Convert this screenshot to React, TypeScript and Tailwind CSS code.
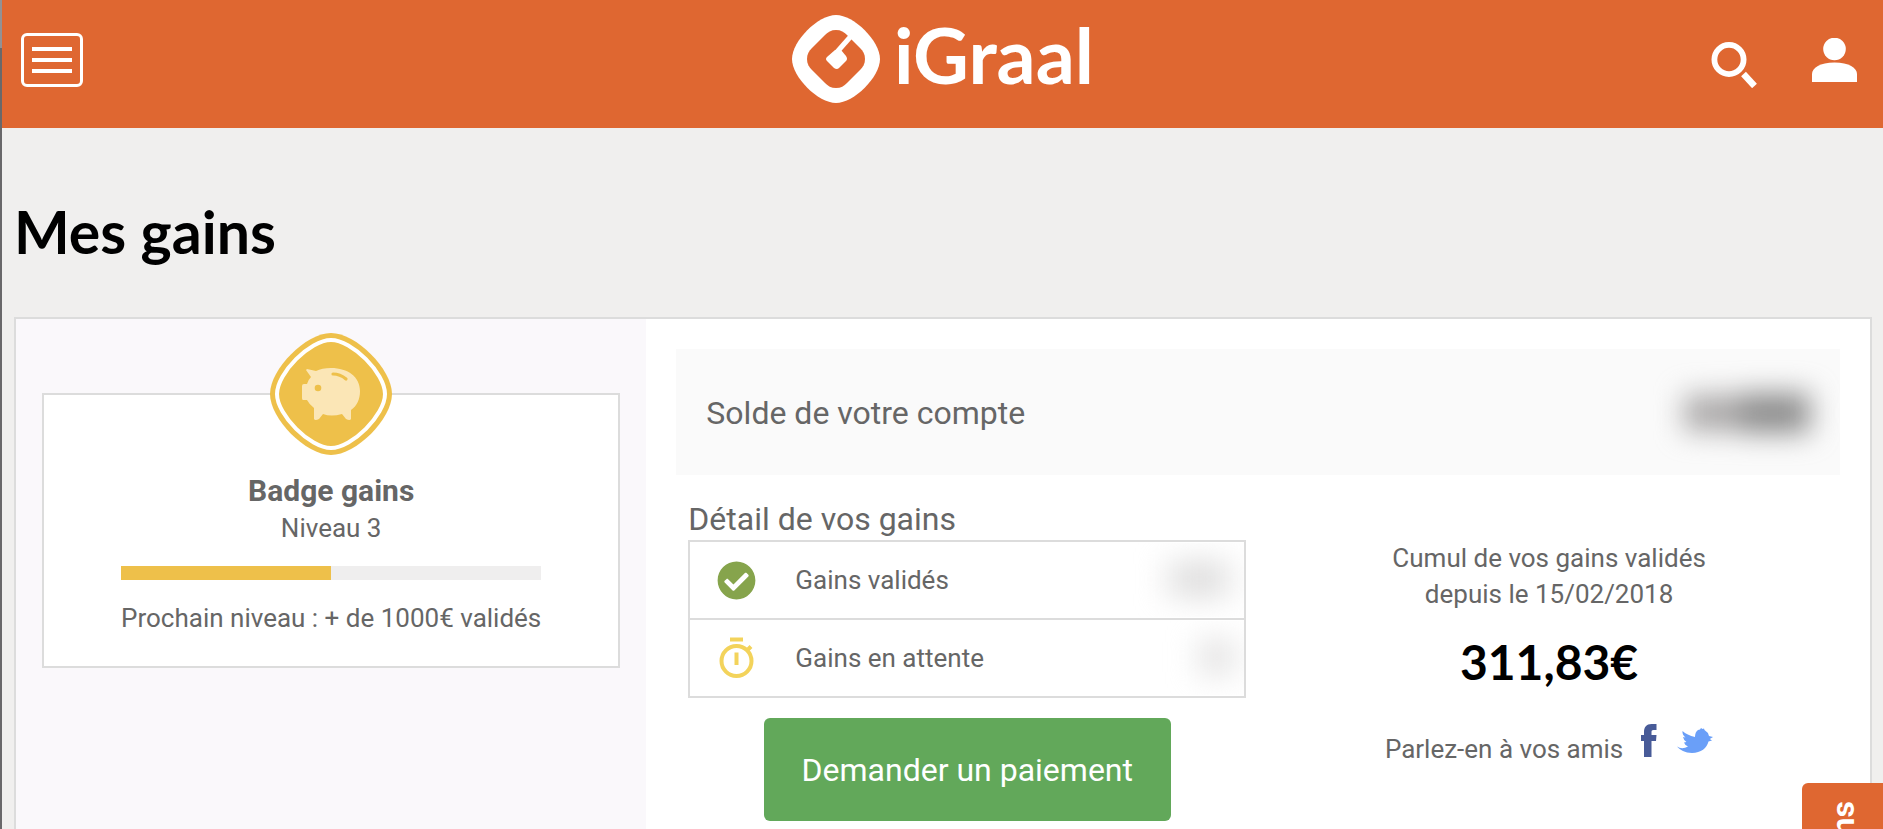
import { FaCheckCircle } from 'react-icons/fa';

const LATO = "font-['Lato','Liberation_Sans',sans-serif]";

const NEXT_LEVEL_PROGRESS = 50;

function Logo() {
  return (
    <a href="#" className="ml-2 flex items-start text-white">
      <svg viewBox="0 0 88 88" className="mt-[15px] h-[88px] w-[88px]" fill="none">
        <path d="M44 0C62 0 88 26 88 44C88 62 62 88 44 88C26 88 0 62 0 44C0 26 26 0 44 0Z" fill="#fff" />
        <path
          d="M44 15C49 15 52 17 55 20L68 33C71 36 73 39 73 44C73 49 71 52 68 55L55 68C52 71 49 73 44 73C39 73 36 71 33 68L20 55C17 52 15 49 15 44C15 39 17 36 20 33L33 20C36 17 39 15 44 15Z"
          fill="#df6731"
        />
        <path d="M60 20L45 37" stroke="#fff" strokeWidth="5" />
        <path d="M43 35L49 35L54 41Q56 44 54 46L47 53Q45 55 42 53L35 46Q33 44 35 42Z" fill="#fff" />
      </svg>
      <span className={`${LATO} ml-[14px] mt-2 text-[77px] font-bold leading-[92px]`}>iGraal</span>
    </a>
  );
}

function Header() {
  return (
    <header className="flex h-32 items-start justify-between bg-[#df6731] pl-[19px] pr-[26px]">
      <div className="flex-1">
        <button className="mt-[33px] flex h-[54px] w-[62px] flex-col items-center justify-center gap-[7px] rounded-md border-[3px] border-white pb-px">
          <span className="h-1 w-10 bg-white" />
          <span className="h-1 w-10 bg-white" />
          <span className="h-1 w-10 bg-white" />
        </button>
      </div>
      <Logo />
      <div className="flex flex-1 items-start justify-end gap-[55px] pt-[38px]">
        <button className="mt-[3px]">
          <svg viewBox="0 0 46 47" className="h-[47px] w-[46px]" fill="none" stroke="#fff">
            <circle cx="18" cy="18.500" r="14.600" strokeWidth="5.800" />
            <path d="M32.500 33L43.500 45" strokeWidth="6.500" />
          </svg>
        </button>
        <button>
          <svg viewBox="0 0 45 44" className="h-11 w-[45px]" fill="#fff">
            <circle cx="22.500" cy="11" r="11.300" />
            <path d="M0 44V36C0 30 8 24.500 22.500 24.500S45 30 45 36V44Z" />
          </svg>
        </button>
      </div>
    </header>
  );
}

function PiggyBadge() {
  return (
    <svg viewBox="0 0 122 122" className="h-[122px] w-[122px]" fill="none">
      <path d="M61 0C86 0 122 36 122 61C122 86 86 122 61 122C36 122 0 86 0 61C0 36 36 0 61 0Z" fill="#eec04a" />
      <path
        d="M61 7C82 7 115 40 115 61C115 82 82 115 61 115C40 115 7 82 7 61C7 40 40 7 61 7Z"
        fill="#eec04a"
        stroke="#fff"
        strokeWidth="4"
      />
      <path
        d="M37 36L46 38Q52 35 61 35C78 35 90 44 90 58C90 66 87 73 81 77V86Q80 88 76 86L72 81Q61 84 53 81L49 86Q45 88 44 86V75Q39 71 37 67H33Q32 67 32 65V53Q32 51 34 51H37Q38 47 41 44L36 37Z"
        fill="#fbe6b6"
      />
      <circle cx="48" cy="55" r="3.300" fill="#eec04a" />
      <path d="M63 41Q70 41 76 46" stroke="#eec04a" strokeWidth="3.200" strokeLinecap="round" />
    </svg>
  );
}

function StopwatchIcon() {
  return (
    <svg viewBox="0 0 36 42" className="h-[42px] w-9" fill="none" stroke="#f3d35b" strokeWidth="4">
      <circle cx="17.500" cy="24" r="15" />
      <path d="M11 2.500H24M17.500 15.500V28M28.500 13L32 9.500" />
    </svg>
  );
}

function FacebookIcon() {
  return (
    <svg viewBox="0 0 16 33" className="h-[33px] w-4" fill="#485b98">
      <path d="M3 33V17H0V11H3V8C3 3 5.500 0 10.500 0H15.500V6H12.500C10.800 6 10.500 6.800 10.500 8.200V11H15.500L15 17H10.500V33Z" />
    </svg>
  );
}

function TwitterIcon() {
  return (
    <svg viewBox="0 0 36 26" className="h-[26px] w-9" fill="#6a9ff8">
      <path d="M0 18.500Q5 22 11 18.500Q8 17.500 7 14.500L9.500 14Q6.500 12 6 9L8.500 9.500Q5 6.500 5.500 3Q10 7 18 9Q18 4 21 2L23 1.500L24 0L25.500 1L27 .500L27.500 2Q31 4 32 8L36 9L32.800 11L35 12.500L31.500 13.500C30 20 24 25 15 25C8 25 3 22 0 18.500Z" />
    </svg>
  );
}

function BadgeCard() {
  return (
    <div className="flex flex-col items-center border-2 border-[#dcdcdc] bg-white pb-[30px] text-[26px] leading-9">
      <div className="-mt-[62px]">
        <PiggyBadge />
      </div>
      <h2 className="mt-[18px] text-[30px] font-bold">Badge gains</h2>
      <p className="mt-px">Niveau 3</p>
      <div className="mt-5">
        <div className="h-3.5 bg-[#efeeee]">
          <div className="h-full bg-[#eec04a]" style={{ width: `${NEXT_LEVEL_PROGRESS}%` }} />
        </div>
        <p className="mt-5">Prochain niveau : + de 1000€ validés</p>
      </div>
    </div>
  );
}

function GainsTable() {
  return (
    <table className="w-full border-collapse">
      <tbody>
        <tr className="h-[78px] border-2 border-[#dcdcdc]">
          <td className="w-[106px] pl-[27px]">
            <FaCheckCircle className="h-[39px] w-[39px] text-[#86a44c]" />
          </td>
          <td>Gains validés</td>
          <td className="w-28">
            <div className="h-[74px] overflow-hidden py-5 pl-9">
              <div className="h-8 w-[60px] bg-[#dad9d9] blur-lg" />
            </div>
          </td>
        </tr>
        <tr className="h-[78px] border-2 border-[#dcdcdc]">
          <td className="pl-[29px]">
            <StopwatchIcon />
          </td>
          <td>Gains en attente</td>
          <td>
            <div className="h-[74px] overflow-hidden py-5 pl-[68px]">
              <div className="h-8 w-8 bg-[#dcdbdb] blur-lg" />
            </div>
          </td>
        </tr>
      </tbody>
    </table>
  );
}

function Summary() {
  return (
    <div className="px-[30px] pt-[30px]">
      <div className="flex h-[126px] items-center justify-between overflow-hidden bg-[#fafafa] px-[30px] pt-0.5">
        <p className="text-[32px]">Solde de votre compte</p>
        <div className="flex items-center blur-[14px]">
          <span className="h-9 w-14 bg-[#aaa8a8]" />
          <span className="h-10 w-[70px] bg-[#8c8c8c]" />
        </div>
      </div>
      <div className="grid grid-cols-2">
        <div className="px-3 pt-6">
          <h2 className="mb-px text-[32px] leading-10">Détail de vos gains</h2>
          <GainsTable />
          <div className="mt-5 flex justify-center">
            <button className="h-[103px] rounded-md bg-[#62a85a] px-[38px] text-[32px] text-white">
              Demander un paiement
            </button>
          </div>
        </div>
        <div className="flex flex-col items-center pt-[65px] text-center">
          <p>
            Cumul de vos gains validés
            <br />
            depuis le 15/02/2018
          </p>
          <p className={`${LATO} mt-5 text-5xl font-bold leading-[60px] text-black`}>311,83€</p>
          <div className="mt-8 flex items-start">
            <p className="mt-[7px]">Parlez-en à vos amis</p>
            <a href="#" className="ml-[18px]">
              <FacebookIcon />
            </a>
            <a href="#" className="ml-5 mt-1">
              <TwitterIcon />
            </a>
          </div>
        </div>
      </div>
    </div>
  );
}

export default function App() {
  return (
    <div className="flex min-h-screen overflow-hidden bg-[#f0efee] font-['Roboto','Liberation_Sans',sans-serif] text-[26px] leading-9 text-[#666]">
      <div className="w-0.5 bg-[#69686a]">
        <div className="h-12 bg-[#929194]" />
      </div>
      <div className="flex flex-1 flex-col">
        <Header />
        <main className="flex flex-1 flex-col pl-3 pr-[11px]">
          <h1 className={`${LATO} mb-[48px] mt-[67px] text-[59px] font-bold leading-[74px] text-black`}>Mes gains</h1>
          <section className="grid flex-1 grid-cols-[34fr_66fr] border-2 border-b-0 border-[#dcdcdc] bg-white">
            <div className="bg-[#faf8fb] px-[26px] pt-[74px]">
              <BadgeCard />
            </div>
            <Summary />
          </section>
        </main>
      </div>
      <button className="fixed bottom-0 right-0 flex h-[46px] w-[81px] items-start justify-center overflow-hidden rounded-tl-md bg-[#df6731] pt-[18px] text-white">
        <span className="rotate-180 text-[32px] font-bold leading-9 [writing-mode:vertical-rl]">ns</span>
      </button>
    </div>
  );
}
